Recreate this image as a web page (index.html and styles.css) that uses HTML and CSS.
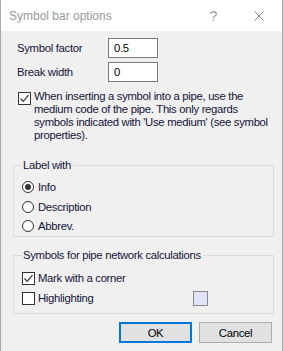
FILE: index.html
```html
<!DOCTYPE html>
<html>
<head>
<meta charset="utf-8">
<link rel="stylesheet" href="styles.css">
</head>
<body>
<div class="window">
  <div class="titlebar">
    <span class="title">Symbol bar options</span>
    <span class="help">?</span>
    <svg class="close" width="10" height="10" viewBox="0 0 10 10"><path d="M0.5 0.5L9.5 9.5M9.5 0.5L0.5 9.5" stroke="#8a8a8a" stroke-width="1" fill="none"/></svg>
  </div>
  <div class="content">
    <div class="field-row">
      <label class="field-label">Symbol factor</label>
      <div class="input">0.5</div>
    </div>
    <div class="field-row">
      <label class="field-label">Break width</label>
      <div class="input">0</div>
    </div>
    <div class="check-para">
      <span class="checkbox checked"><svg width="11" height="11" viewBox="0 0 11 11"><path d="M1.5 5.5L4.2 8.3L9.5 2.2" stroke="#333" stroke-width="1.2" fill="none"/></svg></span>
      <span class="para-text">When inserting a symbol into a pipe, use the<br>medium code of the pipe. This only regards<br>symbols indicated with 'Use medium' (see symbol<br>properties).</span>
    </div>
    <fieldset class="group group-label">
      <legend>Label with</legend>
      <div class="opt"><span class="radio on"></span><span>Info</span></div>
      <div class="opt"><span class="radio"></span><span>Description</span></div>
      <div class="opt"><span class="radio"></span><span>Abbrev.</span></div>
    </fieldset>
    <fieldset class="group group-calc">
      <legend>Symbols for pipe network calculations</legend>
      <div class="opt"><span class="checkbox checked"><svg width="11" height="11" viewBox="0 0 11 11"><path d="M1.5 5.5L4.2 8.3L9.5 2.2" stroke="#333" stroke-width="1.2" fill="none"/></svg></span><span class="opt-text">Mark with a corner</span></div>
      <div class="opt"><span class="checkbox"></span><span class="opt-text grow">Highlighting</span><span class="swatch"></span></div>
    </fieldset>
    <div class="buttons">
      <div class="btn btn-ok">OK</div>
      <div class="btn">Cancel</div>
    </div>
  </div>
</div>
</body>
</html>
```
FILE: styles.css
```css
html, body {
  margin: 0;
  padding: 0;
}
body {
  width: 283px;
  height: 351px;
  overflow: hidden;
  background: #f0f0f0;
  font-family: "Liberation Sans", Arial, sans-serif;
  font-size: 11.3px;
  letter-spacing: -0.3px;
  color: #14143a;
}
.window {
  width: 283px;
  height: 351px;
  box-sizing: border-box;
  border-left: 1px solid #a8a8a8;
  border-right: 1px solid #a8a8a8;
  background: #f0f0f0;
}
.titlebar {
  height: 31px;
  background: #ffffff;
  display: flex;
  align-items: center;
  padding-left: 8px;
}
.title {
  font-size: 12px;
  letter-spacing: 0;
  color: #9a9a9a;
  flex: 1;
}
.help {
  font-size: 14px;
  color: #9a9a9a;
  margin-right: 37px;
}
.close {
  margin-right: 18px;
}
.content {
  padding: 7px 9px 0 12px;
}
.field-row {
  display: flex;
  align-items: center;
  height: 20px;
  margin-bottom: 4px;
}
.field-label {
  width: 95px;
  padding-left: 4px;
  box-sizing: border-box;
}
.input {
  width: 50px;
  height: 20px;
  box-sizing: border-box;
  border: 1px solid #7a7a7a;
  background: #fff;
  padding-left: 5px;
  line-height: 18px;
  color: #000;
}
.check-para {
  display: flex;
  margin-top: 8px;
  margin-left: 5px;
  height: 52px;
}
.checkbox {
  width: 13px;
  height: 13px;
  box-sizing: border-box;
  border: 1px solid #333;
  background: #fff;
  display: flex;
  align-items: center;
  justify-content: center;
  flex: none;
}
.check-para .checkbox {
  margin-top: 2px;
  margin-right: 3px;
}
.para-text {
  white-space: nowrap;
  line-height: 13px;
}
.group {
  margin: 0;
  padding: 0 0 0 8px;
  border: 1px solid #dcdcdc;
  width: 261px;
  box-sizing: border-box;
  min-width: 0;
}
.group legend {
  padding: 0 2px 0 1px;
  margin-left: 0;
  line-height: 14px;
  height: 14px;
}
.group-label {
  margin-top: 16px;
  padding-top: 5px;
}
.group-calc {
  margin-top: 11px;
  padding-top: 6px;
  padding-bottom: 5px;
}
.opt {
  display: flex;
  align-items: center;
  height: 20px;
}
.group-label .opt {
  height: 19.7px;
}
.radio {
  width: 12px;
  height: 12px;
  box-sizing: border-box;
  border: 1px solid #333;
  border-radius: 50%;
  background: #fff;
  margin-right: 4px;
  display: flex;
  align-items: center;
  justify-content: center;
  flex: none;
}
.radio.on::after {
  content: "";
  width: 6px;
  height: 6px;
  border-radius: 50%;
  background: #333;
}
.group-calc .checkbox {
  margin-right: 3px;
}
.grow {
  flex: none;
  width: 155px;
}
.swatch {
  width: 15px;
  height: 15px;
  box-sizing: border-box;
  border: 1px solid #8a8a8a;
  background: #e2e2f8;
}
.buttons {
  display: flex;
  justify-content: flex-end;
  gap: 7px;
  margin-top: 8px;
  padding-right: 1px;
}
.btn {
  width: 73px;
  height: 21px;
  box-sizing: border-box;
  border: 1px solid #adadad;
  background: #e1e1e1;
  display: flex;
  align-items: center;
  justify-content: center;
  color: #000;
}
.btn-ok {
  border: 2px solid #0078d7;
}
```
